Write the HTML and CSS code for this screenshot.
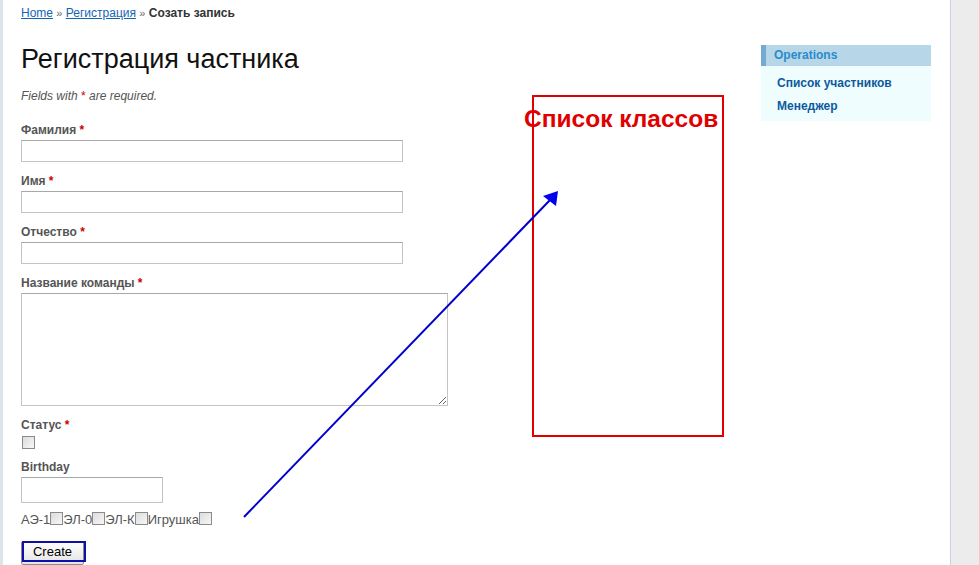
FILE: index.html
```html
<!DOCTYPE html>
<html lang="ru">
<head>
<meta charset="utf-8">
<title>Регистрация частника</title>
<link rel="stylesheet" href="styles.css">
</head>
<body>
<div class="page">
  <div class="breadcrumbs">
    <a href="#">Home</a> <span class="sep">»</span> <a href="#">Регистрация</a> <span class="sep">»</span> <span class="current">Созать запись</span>
  </div>
  <div class="layout">
    <div class="main">
      <h1>Регистрация частника</h1>
      <p class="note">Fields with <span class="req">*</span> are required.</p>
      <form class="form">
        <div class="row">
          <label>Фамилия <span class="req">*</span></label>
          <input type="text" class="text wide">
        </div>
        <div class="row">
          <label>Имя <span class="req">*</span></label>
          <input type="text" class="text wide">
        </div>
        <div class="row">
          <label>Отчество <span class="req">*</span></label>
          <input type="text" class="text wide">
        </div>
        <div class="row">
          <label>Название команды <span class="req">*</span></label>
          <textarea class="area"></textarea>
        </div>
        <div class="row">
          <label>Статус <span class="req">*</span></label>
          <input type="checkbox" class="cb">
        </div>
        <div class="row">
          <label>Birthday</label>
          <input type="text" class="text short">
        </div>
        <div class="classes">АЭ-1<input type="checkbox" class="cb inl">ЭЛ-0<input type="checkbox" class="cb inl">ЭЛ-К<input type="checkbox" class="cb inl">Игрушка<input type="checkbox" class="cb inl"></div>
        <div class="buttons"><button type="button" class="btn">Create</button></div>
      </form>
    </div>
    <div class="sidebar">
      <div class="portlet">
        <div class="portlet-title">Operations</div>
        <ul class="ops">
          <li><a href="#">Список участников</a></li>
          <li><a href="#">Менеджер</a></li>
        </ul>
      </div>
    </div>
  </div>

  <div class="anno-box"></div>
  <div class="anno-text">Список классов</div>
  <svg class="anno-arrow" width="979" height="565" viewBox="0 0 979 565">
    <line x1="244" y1="517" x2="550" y2="200" stroke="#0000cc" stroke-width="2"/>
    <polygon points="558,191 556,206 543,196" fill="#0000ee"/>
  </svg>
</div>
</body>
</html>
```

FILE: styles.css
```css
html {
  background: #ececec;
}
body {
  margin: 0;
  font-family: "Liberation Sans", Arial, sans-serif;
  font-size: 12px;
  color: #555;
}
.page {
  position: relative;
  width: 947px;
  height: 565px;
  overflow: hidden;
  background: #fff;
  border-left: 3px solid #dbe5ee;
  border-right: 1px solid #c7d3de;
}
.breadcrumbs {
  padding: 6px 0 0 18px;
  line-height: 15px;
  color: #666;
}
.breadcrumbs a {
  color: #1464b4;
  text-decoration: underline;
}
.breadcrumbs .sep {
  color: #666;
  font-size: 11px;
}
.breadcrumbs .current {
  color: #333;
  font-weight: bold;
}
.layout {
  display: flex;
  padding-left: 18px;
}
.main {
  width: 740px;
}
h1 {
  margin: 22px 0 0 0;
  font-size: 27px;
  line-height: 32px;
  font-weight: normal;
  color: #111;
}
.note {
  margin: 13px 0 0 0;
  font-style: italic;
  line-height: 16px;
  color: #555;
}
.req {
  color: #c00;
  font-style: normal;
}
.form {
  margin-top: 18px;
}
.row {
  margin-bottom: 11px;
}
.row label {
  display: block;
  font-weight: bold;
  color: #555;
  line-height: 16px;
  margin-bottom: 2px;
}
.text {
  display: block;
  box-sizing: border-box;
  height: 22px;
  margin: 0;
  border: 1px solid #c4c4c4;
  border-top-color: #a8a8a8;
  background: #fff;
  padding: 2px 3px;
}
.wide {
  width: 382px;
}
.short {
  width: 142px;
  height: 26px;
}
.area {
  display: block;
  box-sizing: border-box;
  width: 427px;
  height: 113px;
  margin: 0;
  border: 1px solid #c4c4c4;
  border-top-color: #a8a8a8;
  resize: both;
}
.cb {
  display: block;
  width: 13px;
  height: 13px;
  margin: 0 0 0 1px;
  appearance: none;
  -webkit-appearance: none;
  border: 1px solid #8a8a8a;
  background: linear-gradient(135deg, #dcdcdc, #f7f7f7);
  box-sizing: border-box;
}
.row .cb {
  margin-top: 3px;
  margin-bottom: -1px;
}
.classes {
  margin-top: -2px;
  font-size: 13px;
  line-height: 16px;
  color: #555;
}
.cb.inl {
  display: inline-block;
  vertical-align: -1px;
  margin: 0;
}
.buttons {
  margin-top: 13px;
}
.btn {
  margin-left: 0;
  width: 63px;
  height: 24px;
  font-family: "Liberation Sans", Arial, sans-serif;
  font-size: 13px;
  color: #000;
  background: linear-gradient(#ffffff, #e4e4e4);
  border: 1px solid #8c8c8c;
  border-radius: 2px;
  padding: 0 0 3px 0;
  position: relative;
}
.btn::after {
  content: "";
  position: absolute;
  left: 0;
  top: -1px;
  width: 60px;
  height: 17px;
  border: 2px solid #1010a8;
}
.sidebar {
  margin-top: 24px;
  width: 170px;
}
.portlet {
  background: #effdff;
  padding-bottom: 3px;
}
.portlet-title {
  background: #b7d6e8;
  border-left: 5px solid #74aad0;
  color: #298ccc;
  font-weight: bold;
  height: 21px;
  line-height: 21px;
  padding-left: 8px;
}
.ops {
  list-style: none;
  margin: 0;
  padding: 6px 0 0 16px;
}
.ops li {
  line-height: 23px;
}
.ops a {
  color: #0d5a9c;
  font-weight: bold;
  text-decoration: none;
}
.anno-box {
  position: absolute;
  left: 529px;
  top: 95px;
  width: 188px;
  height: 338px;
  border: 2px solid #e00000;
}
.anno-text {
  position: absolute;
  left: 521px;
  top: 105px;
  font-size: 24.5px;
  line-height: 28px;
  font-weight: bold;
  color: #e00000;
  white-space: nowrap;
}
.anno-arrow {
  position: absolute;
  left: -3px;
  top: 0;
}
```
